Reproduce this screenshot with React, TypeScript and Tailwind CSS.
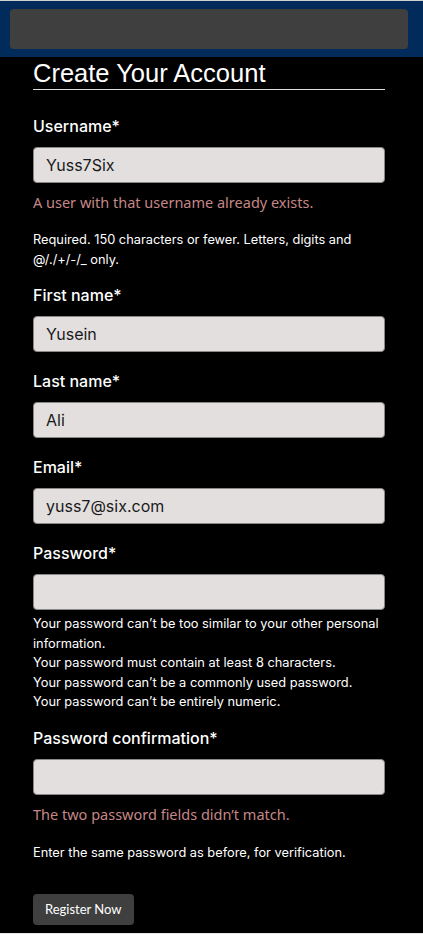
const bodyFont = { fontFamily: "Inter, 'Liberation Sans', sans-serif" }

function Label({ text, className = "" }: { text: string; className?: string }) {
  return (
    <label className={`block text-[16px] leading-[24px] font-medium text-white ${className}`}>
      {text}
    </label>
  )
}

function Field({ value }: { value?: string }) {
  return (
    <div className="mt-[9px] h-[36px] w-full rounded-[4px] border border-[#8a8787] bg-[#e3dfdf] px-[12px] flex items-center text-[16px] text-[#1a1a1a]">
      {value}
    </div>
  )
}

function ErrorText({ text }: { text: string }) {
  return (
    <p
      className="mt-[8px] text-[14.5px] leading-[22px] text-[#c68787]"
      style={{ fontFamily: "'Noto Sans', Lato, sans-serif" }}
    >
      {text}
    </p>
  )
}

export default function App() {
  return (
    <div className="min-h-screen bg-black" style={bodyFont}>
      <header className="border-t border-[#d0d0d0] bg-[#012b5a] pl-[10px] pr-[15px] pt-[8px] pb-[8px]">
        <div className="h-[40px] rounded-[4px] bg-[#3f3f3f]" />
      </header>

      <main className="ml-[33px] w-[352px] pb-[8px]">
        <h1
          className="pt-[1px] text-[25.5px] leading-[30px] text-white border-b border-[#dcdcdc] pb-[1px]"
          style={{ fontFamily: "'Liberation Sans', Arial, sans-serif" }}
        >
          Create Your Account
        </h1>

        <Label text="Username*" className="mt-[24px]" />
        <Field value="Yuss7Six" />
        <ErrorText text="A user with that username already exists." />
        <p className="mt-[17px] text-[12.8px] leading-[19.5px] text-white">
          Required. 150 characters or fewer. Letters, digits and @/./+/-/_ only.
        </p>

        <Label text="First name*" className="mt-[14px]" />
        <Field value="Yusein" />

        <Label text="Last name*" className="mt-[17px]" />
        <Field value="Ali" />

        <Label text="Email*" className="mt-[17px]" />
        <Field value="yuss7@six.com" />

        <Label text="Password*" className="mt-[17px]" />
        <Field />
        <ul className="mt-[4px] text-[12.8px] leading-[19.5px] text-white">
          <li>Your password can’t be too similar to your other personal information.</li>
          <li>Your password must contain at least 8 characters.</li>
          <li>Your password can’t be a commonly used password.</li>
          <li>Your password can’t be entirely numeric.</li>
        </ul>

        <Label text="Password confirmation*" className="mt-[14px]" />
        <Field />
        <ErrorText text="The two password fields didn’t match." />
        <p className="mt-[18px] text-[12.8px] leading-[19.5px] text-white">
          Enter the same password as before, for verification.
        </p>

        <button
          className="mt-[32px] h-[31px] rounded-[4px] bg-[#3f3f3f] px-[12px] text-[13px] text-white"
          style={{ fontFamily: "Lato, 'Noto Sans', sans-serif" }}
        >
          Register Now
        </button>
      </main>

      <footer className="h-[40px] bg-[#e6e6e6]" />
    </div>
  )
}
